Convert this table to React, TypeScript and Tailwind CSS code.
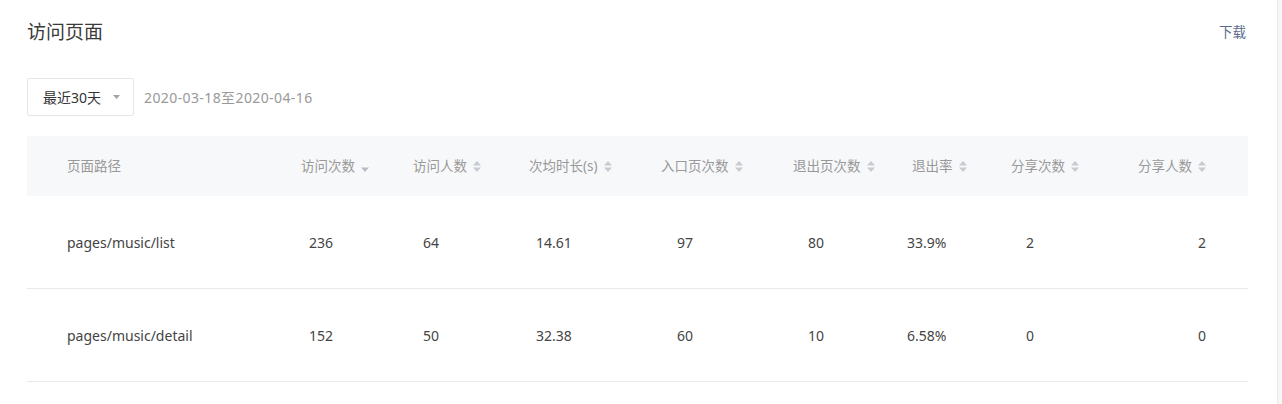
import React from "react";

type Col = {
  label: string;
  sort: "none" | "both" | "desc";
  head: string;
  cell: string;
};

const cols: Col[] = [
  { label: "页面路径", sort: "none", head: "pl-10", cell: "pl-10" },
  { label: "访问次数", sort: "desc", head: "", cell: "pl-[8px]" },
  { label: "访问人数", sort: "both", head: "", cell: "pl-[10px]" },
  { label: "次均时长(s)", sort: "both", head: "", cell: "pl-[7px]" },
  { label: "入口页次数", sort: "both", head: "", cell: "pl-[16px]" },
  { label: "退出页次数", sort: "both", head: "", cell: "pl-[15px]" },
  { label: "退出率", sort: "both", head: "", cell: "-ml-[5px]" },
  { label: "分享次数", sort: "both", head: "", cell: "pl-[15px]" },
  { label: "分享人数", sort: "both", head: "justify-end pr-[41px]", cell: "justify-end pr-[42px]" },
];

const rows = [
  ["pages/music/list", "236", "64", "14.61", "97", "80", "33.9%", "2", "2"],
  ["pages/music/detail", "152", "50", "32.38", "60", "10", "6.58%", "0", "0"],
];

const grid = "grid grid-cols-[274px_112px_116px_132px_132px_119px_99px_120px_1fr]";

function SortIcon({ mode }: { mode: "both" | "desc" }) {
  return (
    <svg width="10" height="13" viewBox="0 0 10 13" className="ml-[5px] shrink-0">
      {mode === "both" && <path d="M5 1 L9 5.5 H1 Z" fill="#c8cbd1" />}
      <path d="M1 7.5 H9 L5 12 Z" fill={mode === "desc" ? "#b9bcc2" : "#c8cbd1"} />
    </svg>
  );
}

export default function App() {
  return (
    <div
      className="flex h-[404px] w-full bg-white text-[#333]"
      style={{ fontFamily: '"Noto Sans", "Noto Sans CJK SC", sans-serif' }}
    >
      <div className="flex-1 pl-[27px] pr-[29px] pt-[20px]">
        {/* title */}
        <div className="flex h-6 items-center justify-between">
          <h1 className="text-[19px] font-normal leading-6 text-[#3a3a3a]">访问页面</h1>
          <a className="mr-[2px] text-[13.5px] leading-6 text-[#5c6a8c]">下载</a>
        </div>

        {/* filters */}
        <div className="mt-[34px] flex items-center">
          <div className="flex h-[38px] w-[107px] items-center justify-between rounded-[2px] border border-[#e5e6ea] pl-[15px] pr-[13px]">
            <span className="text-[14px] text-[#333]">最近30天</span>
            <svg width="7" height="4" viewBox="0 0 7 4">
              <path d="M0 0 H7 L3.5 4 Z" fill="#a0a3a8" />
            </svg>
          </div>
          <span className="ml-[10px] text-[14px] tracking-[0.4px] text-[#999]">2020-03-18至2020-04-16</span>
        </div>

        {/* table */}
        <div className="mt-5">
          <div className={`${grid} h-[60px] bg-[#f7f8fa] text-[#999]`}>
            {cols.map((c) => (
              <div key={c.label} className={`flex items-center ${c.head}`}>
                <span className="text-[13.5px]">{c.label}</span>
                {c.sort !== "none" && <SortIcon mode={c.sort} />}
              </div>
            ))}
          </div>
          {rows.map((r) => (
            <div key={r[0]} className={`${grid} h-[93px] border-b border-[#e8e9ec] text-[14px] text-[#444]`}>
              {r.map((v, i) => (
                <div key={i} className={`flex items-center ${cols[i].cell}`}>
                  {v}
                </div>
              ))}
            </div>
          ))}
        </div>
      </div>

      {/* scrollbar track */}
      <div className="w-[5px] border-l border-[#ececec] bg-[#f6f6f6]" />
    </div>
  );
}
